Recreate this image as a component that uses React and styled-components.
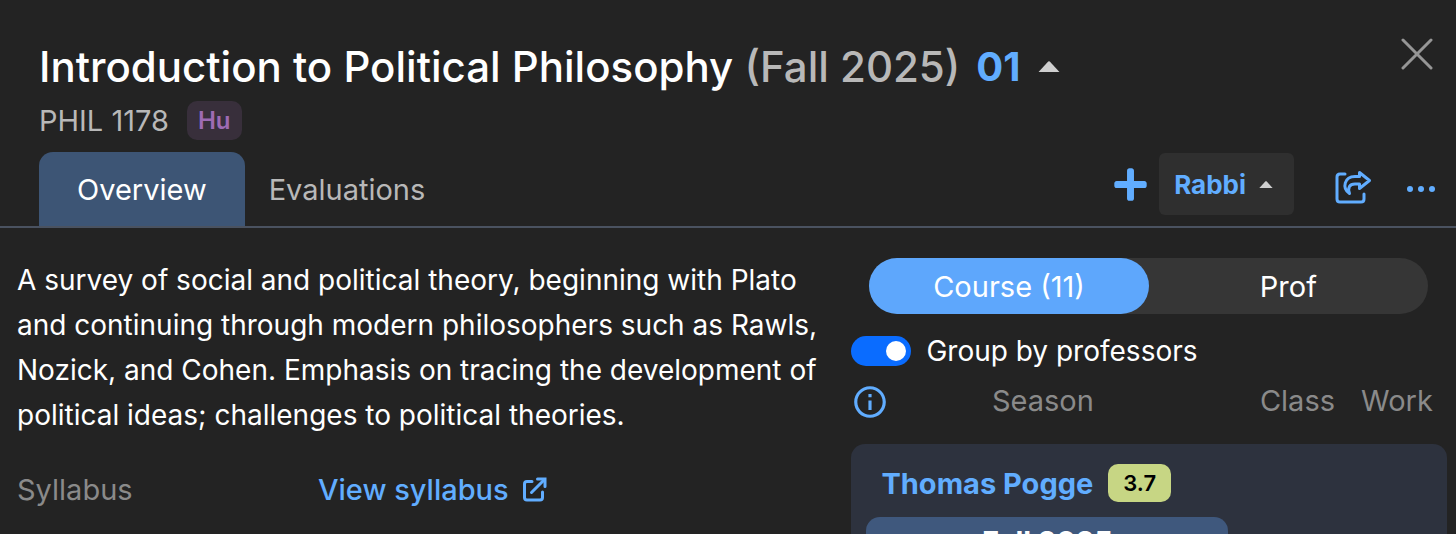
import { useState } from "react";
import styled, { createGlobalStyle } from "styled-components";
import { FaPlus } from "react-icons/fa";
import { MdInfoOutline } from "react-icons/md";


function Caret({ width }) {
    return (
        <svg width={width} height={width / 2} viewBox="0 0 20 10" fill="#cfcfcf" aria-hidden="true">
            <path d="M0.500 10 L9.300 0.500 Q10 0 10.700 0.500 L19.500 10 Z" />
        </svg>
    )
}

function ShareIcon() {
    return (
        <svg width="37" height="34" viewBox="0 0 37 34" fill="none" stroke="currentColor" strokeWidth="3" strokeLinecap="round" strokeLinejoin="round" aria-hidden="true">
            <path d="M10 4 H5 Q2 4 2 7 V29 Q2 32 5 32 H26 Q29 32 29 29 V24" />
            <path d="M24.500 2.500 L34.500 10.500 L24.500 18.500 V14 H20 C14.500 14 12.500 17.500 14.500 23.500 C6.500 18 9.500 6.500 20 6.500 H24.500 Z" />
        </svg>
    )
}

function ExternalIcon() {
    return (
        <svg width="24" height="25" viewBox="0 0 24 25" fill="none" stroke="currentColor" strokeWidth="3" strokeLinecap="round" strokeLinejoin="round" aria-hidden="true">
            <path d="M9 4.500 H4 Q1.500 4.500 1.500 7 V20.500 Q1.500 23 4 23 H17 Q19.500 23 19.500 20.500 V15" />
            <path d="M8.500 15.500 L21 3" />
            <path d="M14.500 2 H22 V9.500" strokeLinejoin="miter" />
        </svg>
    )
}

function App() {
    const [tab, setTab] = useState("overview");
    const [scope, setScope] = useState("course");
    const [grouped, setGrouped] = useState(true);

    return (
        <>
            <GlobalStyle />
            <Modal>
                <Header>
                    <TitleRow>
                        <Title>
                            Introduction to Political Philosophy <Term>(Fall 2025)</Term>
                        </Title>
                        <SectionButton type="button">
                            01
                            <Caret width={22} />
                        </SectionButton>
                        <CloseButton type="button" aria-label="Close">
                            <svg width="32" height="32" viewBox="0 0 32 32" fill="none" stroke="#969696" strokeWidth="3" strokeLinecap="round">
                                <path d="M2 2 L30 30 M30 2 L2 30" />
                            </svg>
                        </CloseButton>
                    </TitleRow>
                    <CodeRow>
                        <Code>PHIL 1178</Code>
                        <Skill>Hu</Skill>
                    </CodeRow>
                    <Bar>
                        <Tab type="button" $active={tab === "overview"} onClick={() => setTab("overview")}>Overview</Tab>
                        <Tab type="button" $active={tab === "evaluations"} onClick={() => setTab("evaluations")}>Evaluations</Tab>
                        <Tools>
                            <IconButton type="button" aria-label="Add to worksheet">
                                <FaPlus size="37px" />
                            </IconButton>
                            <Worksheet type="button">
                                Rabbi
                                <Caret width={14} />
                            </Worksheet>
                            <Share type="button" aria-label="Share">
                                <ShareIcon />
                            </Share>
                            <IconButton type="button" aria-label="More">
                                <svg width="30" height="16" viewBox="0 0 30 16" fill="currentColor">
                                    <circle cx="4" cy="13" r="3" />
                                    <circle cx="15" cy="13" r="3" />
                                    <circle cx="26" cy="13" r="3" />
                                </svg>
                            </IconButton>
                        </Tools>
                    </Bar>
                </Header>
                <Content>
                    <Details>
                        <Description>
                            A survey of social and political theory, beginning with Plato and continuing through modern philosophers such as Rawls, Nozick, and Cohen. Emphasis on tracing the development of political ideas; challenges to political theories.
                        </Description>
                        <Field>
                            <dt>Syllabus</dt>
                            <dd>
                                <SyllabusLink href="#syllabus">
                                    View syllabus
                                    <ExternalIcon />
                                </SyllabusLink>
                            </dd>
                        </Field>
                    </Details>
                    <Ratings>
                        <Segments>
                            <Segment type="button" $active={scope === "course"} onClick={() => setScope("course")}>Course (11)</Segment>
                            <Segment type="button" $active={scope === "prof"} onClick={() => setScope("prof")}>Prof</Segment>
                        </Segments>
                        <SwitchRow>
                            <Switch id="group" type="checkbox" checked={grouped} onChange={(e) => setGrouped(e.target.checked)} />
                            <label htmlFor="group">Group by professors</label>
                        </SwitchRow>
                        <Columns>
                            <Info type="button" aria-label="About ratings">
                                <MdInfoOutline size="38px" />
                            </Info>
                            <span>Season</span>
                            <span>Class</span>
                            <span>Work</span>
                        </Columns>
                        <Card>
                            <Professor>
                                <a href="#professor">Thomas Pogge</a>
                                <Rating>3.7</Rating>
                            </Professor>
                            <Season type="button">Fall 2025</Season>
                        </Card>
                    </Ratings>
                </Content>
            </Modal>
        </>
    )
}

export default App;

const GlobalStyle = createGlobalStyle`
* {
    box-sizing: border-box;
    margin: 0;
}
body {
    background-color: #232323;
    color: #ffffff;
    font-family: Inter, "Liberation Sans", sans-serif;
    font-size: 29px;
}
button {
    font: inherit;
    color: inherit;
    background: none;
    border: none;
    padding: 0;
    cursor: pointer;
}
a {
    color: #61adff;
    text-decoration: none;
}
svg {
    display: block;
}
`;

const Modal = styled.div`
height: 100vh;
display: flex;
flex-direction: column;
overflow: hidden;
`;

const Header = styled.header`
flex: none;
padding: 38px 20px 0 39px;
border-bottom: 2px solid #4a5260;
`;

const TitleRow = styled.div`
display: flex;
align-items: center;
height: 56px;
`;

const Title = styled.h1`
font-size: 42px;
font-weight: 500;
white-space: nowrap;
`;

const Term = styled.span`
color: #b8b8b8;
`;

const SectionButton = styled.button`
display: flex;
align-items: center;
gap: 17px;
margin-left: 16px;
font-size: 40px;
font-weight: 700;
color: #61adff;
`;

const CloseButton = styled.button`
align-self: flex-start;
margin-left: auto;
margin-right: 3px;
`;

const CodeRow = styled.div`
display: flex;
align-items: center;
gap: 18px;
height: 39px;
margin-top: 7px;
`;

const Code = styled.span`
color: #b8b8b8;
`;

const Skill = styled.span`
padding: 0 11px;
line-height: 39px;
border-radius: 10px;
background-color: #382f3b;
color: #9e6bb3;
font-size: 24px;
font-weight: 600;
`;

const Bar = styled.nav`
display: flex;
height: 74px;
margin-top: 12px;
`;

const Tab = styled.button`
padding: 0 ${({ $active }) => ($active ? "38px" : "24px")};
border-radius: 14px 14px 0 0;
background-color: ${({ $active }) => ($active ? "#3d5575" : "transparent")};
color: ${({ $active }) => ($active ? "#ffffff" : "#b8b8b8")};
`;

const Tools = styled.div`
display: flex;
align-items: center;
height: 64px;
margin-left: auto;
color: #61adff;
`;

const IconButton = styled.button`
color: #61adff;
`;

const Worksheet = styled.button`
display: flex;
align-items: center;
gap: 13px;
height: 62px;
padding: 0 21px 0 15px;
margin-left: 10px;
border-radius: 6px;
background-color: #2f2f2f;
font-size: 26px;
font-weight: 700;
`;

const Share = styled(IconButton)`
padding-top: 6px;
margin: 0 34px 0 41px;
`;

const Content = styled.main`
display: grid;
grid-template-columns: 58fr 42fr;
padding: 30px 9px 0 17px;
column-gap: 12px;
`;

const Details = styled.section`
min-width: 0;
`;

const Description = styled.p`
font-size: 28px;
line-height: 45px;
`;

const Field = styled.dl`
display: grid;
grid-template-columns: 301px 1fr;
align-items: center;
margin-top: 34px;
dt{
    color: #8a8a8a;
}
`;

const SyllabusLink = styled.a`
display: inline-flex;
align-items: center;
gap: 14px;
font-weight: 500;
`;

const Ratings = styled.section`
min-width: 0;
`;

const Segments = styled.div`
display: flex;
height: 56px;
margin: 0 19px 0 18px;
border-radius: 28px;
background-color: #363636;
`;

const Segment = styled.button`
flex: 1;
border-radius: 28px;
background-color: ${({ $active }) => ($active ? "#5ea7fc" : "transparent")};
`;

const SwitchRow = styled.div`
display: flex;
align-items: center;
gap: 15px;
height: 36px;
margin-top: 19px;
font-size: 28px;
`;

const Switch = styled.input`
appearance: none;
width: 60px;
height: 30px;
padding: 5px;
border-radius: 15px;
background-color: ${({ checked }) => (checked ? "#0a6cff" : "#555555")};
cursor: pointer;
&::before{
    content: "";
    display: block;
    width: 20px;
    height: 20px;
    margin-left: ${({ checked }) => (checked ? "30px" : "0")};
    border-radius: 50%;
    background-color: #ffffff;
}
`;

const Columns = styled.div`
display: grid;
grid-template-columns: 37px 309px 1fr 100px;
align-items: center;
height: 44px;
margin-top: 9px;
color: #8a8a8a;
span{
    text-align: center;
}
span:nth-of-type(2){
    text-align: right;
    padding-right: 12px;
}
`;

const Info = styled.button`
padding-top: 4px;
color: #61adff;
`;

const Card = styled.article`
padding: 20px 15px;
margin-top: 22px;
border-radius: 14px;
background-color: #2d323e;
`;

const Professor = styled.h2`
display: flex;
align-items: center;
gap: 15px;
padding-left: 15px;
font-size: 29px;
font-weight: 700;
`;

const Rating = styled.span`
padding: 0 15px;
line-height: 38px;
border-radius: 10px;
background-color: #c7d684;
color: #000000;
font-size: 22px;
font-weight: 600;
`;

const Season = styled.button`
width: 64%;
height: 48px;
margin-top: 15px;
border-radius: 14px;
background-color: #3f587d;
font-weight: 700;
`;
